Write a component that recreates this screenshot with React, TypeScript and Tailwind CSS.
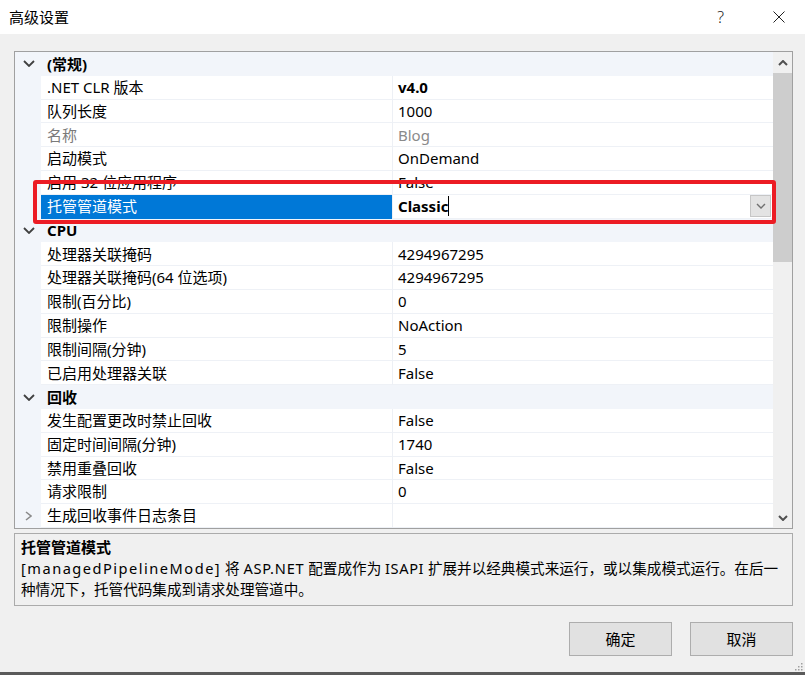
import React from "react";

type R =
  | { kind: "cat"; label: string }
  | { kind: "prop"; name: string; value: string; bold?: boolean; gray?: boolean; selected?: boolean; collapsed?: boolean };

const rows: R[] = [
  { kind: "cat", label: "(常规)" },
  { kind: "prop", name: ".NET CLR 版本", value: "v4.0", bold: true },
  { kind: "prop", name: "队列长度", value: "1000" },
  { kind: "prop", name: "名称", value: "Blog", gray: true },
  { kind: "prop", name: "启动模式", value: "OnDemand" },
  { kind: "prop", name: "启用 32 位应用程序", value: "False" },
  { kind: "prop", name: "托管管道模式", value: "Classic", selected: true },
  { kind: "cat", label: "CPU" },
  { kind: "prop", name: "处理器关联掩码", value: "4294967295" },
  { kind: "prop", name: "处理器关联掩码(64 位选项)", value: "4294967295" },
  { kind: "prop", name: "限制(百分比)", value: "0" },
  { kind: "prop", name: "限制操作", value: "NoAction" },
  { kind: "prop", name: "限制间隔(分钟)", value: "5" },
  { kind: "prop", name: "已启用处理器关联", value: "False" },
  { kind: "cat", label: "回收" },
  { kind: "prop", name: "发生配置更改时禁止回收", value: "False" },
  { kind: "prop", name: "固定时间间隔(分钟)", value: "1740" },
  { kind: "prop", name: "禁用重叠回收", value: "False" },
  { kind: "prop", name: "请求限制", value: "0" },
  { kind: "prop", name: "生成回收事件日志条目", value: "", collapsed: true },
];

function ChevronDown({ w = 12, h = 7, color = "#404040", sw = 1.8 }: { w?: number; h?: number; color?: string; sw?: number }) {
  return (
    <svg width={w} height={h} viewBox={`0 0 ${w} ${h}`}>
      <polyline points={`1,1 ${w / 2},${h - 1} ${w - 1},1`} fill="none" stroke={color} strokeWidth={sw} />
    </svg>
  );
}

function ChevronUp({ w = 10, h = 6, color = "#505050", sw = 2 }: { w?: number; h?: number; color?: string; sw?: number }) {
  return (
    <svg width={w} height={h} viewBox={`0 0 ${w} ${h}`}>
      <polyline points={`1,${h - 1} ${w / 2},1 ${w - 1},${h - 1}`} fill="none" stroke={color} strokeWidth={sw} />
    </svg>
  );
}

function ChevronRight() {
  return (
    <svg width="7" height="10" viewBox="0 0 7 10">
      <polyline points="1,1 6,5 1,9" fill="none" stroke="#8a8a8a" strokeWidth="1.6" />
    </svg>
  );
}

function Row({ r }: { r: R }) {
  if (r.kind === "cat") {
    return (
      <div className="flex h-[23.8px] shrink-0 bg-[#f2f5fa]">
        <div className="w-[26px] flex items-center justify-center pl-[1px]">
          <ChevronDown />
        </div>
        <div className="flex-1 flex items-center pl-[6px] font-bold text-black">{r.label}</div>
      </div>
    );
  }
  return (
    <div className="flex h-[23.8px] shrink-0 bg-[#f2f5fa]">
      <div className="w-[26px] flex items-center justify-center">{r.collapsed ? <ChevronRight /> : null}</div>
      <div
        className={
          r.selected
            ? "w-[351px] bg-[#0078d7] text-white flex items-center pl-[6px] border-b border-[#0078d7]"
            : "w-[351px] bg-white flex items-center pl-[6px] border-b border-[#eef1f6] " + (r.gray ? "text-[#7a7a7a]" : "text-black")
        }
      >
        <span className="whitespace-nowrap">{r.name}</span>
      </div>
      <div className="w-px bg-[#edf0f5]" />
      <div
        className={
          "flex-1 bg-white flex items-center pl-[5px] border-b border-[#eef1f6] " +
          (r.gray ? "text-[#8a8a8a]" : "text-black") +
          (r.bold ? " font-bold" : "")
        }
      >
        {r.selected ? (
          <div className="flex items-center w-full h-full">
            <span className="font-bold">{r.value}</span>
            <span className="w-px h-[20px] bg-black" />
            <div className="ml-auto mr-[2px] w-[21px] h-[22px] bg-[#e3e3e3] border border-[#c6c6c6] flex items-center justify-center">
              <ChevronDown w={10} h={6} color="#707070" sw={1.4} />
            </div>
          </div>
        ) : (
          <span className="whitespace-nowrap">{r.value}</span>
        )}
      </div>
    </div>
  );
}

export default function App() {
  return (
    <div className="relative w-[805px] h-[675px] bg-[#f0f0f0] flex flex-col overflow-hidden font-['Noto_Sans','Noto_Sans_CJK_SC',sans-serif] text-[15px] text-black">
      {/* Title bar */}
      <div className="h-[34px] bg-white flex items-center shrink-0">
        <div className="pl-[9px] text-[15px] leading-none">高级设置</div>
        <div className="ml-auto flex items-center">
          <span className="text-[16px] font-light text-[#222] mr-[49px] leading-none">?</span>
          <div className="mr-[20px] flex items-center">
            <svg width="12" height="12" viewBox="0 0 12 12">
              <line x1="0.5" y1="0.5" x2="11.5" y2="11.5" stroke="#222" strokeWidth="1" />
              <line x1="11.5" y1="0.5" x2="0.5" y2="11.5" stroke="#222" strokeWidth="1" />
            </svg>
          </div>
        </div>
      </div>

      {/* Property grid */}
      <div className="mt-[17px] ml-[14px] mr-[12px] h-[478px] border border-[#a0a0a0] bg-white flex shrink-0">
        <div className="flex-1 flex flex-col overflow-hidden">
          {rows.map((r, i) => (
            <Row key={i} r={r} />
          ))}
        </div>
        <div className="w-[19px] bg-[#f0f0f0] flex flex-col">
          <div className="h-[21px] flex items-center justify-center">
            <ChevronUp />
          </div>
          <div className="h-[189px] bg-[#cdcdcd] mt-[0px]" />
          <div className="flex-1" />
          <div className="h-[21px] flex items-center justify-center">
            <ChevronDown w={10} h={6} color="#505050" sw={2} />
          </div>
        </div>
      </div>

      {/* Description */}
      <div className="mt-[4px] ml-[14px] mr-[12px] h-[73px] border border-[#ababab] bg-[#f0f0f0] pl-[6px] pt-[3px] leading-[21px] shrink-0">
        <div className="font-bold">托管管道模式</div>
        <div className="whitespace-nowrap text-[14.6px]">
          <span className="tracking-[1.5px]">[managedPipelineMode]</span> 将{" "}
          <span className="tracking-[0.8px]">ASP.NET</span> 配置成作为{" "}
          <span className="tracking-[0.6px]">ISAPI</span> 扩展并以经典模式来运行，或以集成模式运行。在后一
        </div>
        <div className="whitespace-nowrap text-[14.6px]">种情况下，托管代码集成到请求处理管道中。</div>
      </div>

      {/* Buttons */}
      <div className="mt-[16px] flex justify-end gap-[18px] pr-[12px] shrink-0">
        <button className="w-[103px] h-[34px] bg-[#e1e1e1] border border-[#adadad] flex items-center justify-center text-[15px]">
          确定
        </button>
        <button className="w-[103px] h-[34px] bg-[#e1e1e1] border border-[#adadad] flex items-center justify-center text-[15px]">
          取消
        </button>
      </div>

      <div className="flex-1 flex justify-end items-end pr-[2px] pb-[1px]">
        <svg width="8" height="8" viewBox="0 0 8 8">
          <rect x="6" y="0" width="1.5" height="1.5" fill="#a0a0a0" />
          <rect x="3" y="3" width="1.5" height="1.5" fill="#a0a0a0" />
          <rect x="6" y="3" width="1.5" height="1.5" fill="#a0a0a0" />
          <rect x="0" y="6" width="1.5" height="1.5" fill="#a0a0a0" />
          <rect x="3" y="6" width="1.5" height="1.5" fill="#a0a0a0" />
          <rect x="6" y="6" width="1.5" height="1.5" fill="#a0a0a0" />
        </svg>
      </div>
      <div className="h-[3px] bg-[#5a5a5a] shrink-0" />

      {/* Red annotation box */}
      <div className="absolute left-[33px] top-[180px] w-[743px] h-[44px] border-[4px] border-[#ec1c24] rounded-[3px] pointer-events-none" />
    </div>
  );
}
